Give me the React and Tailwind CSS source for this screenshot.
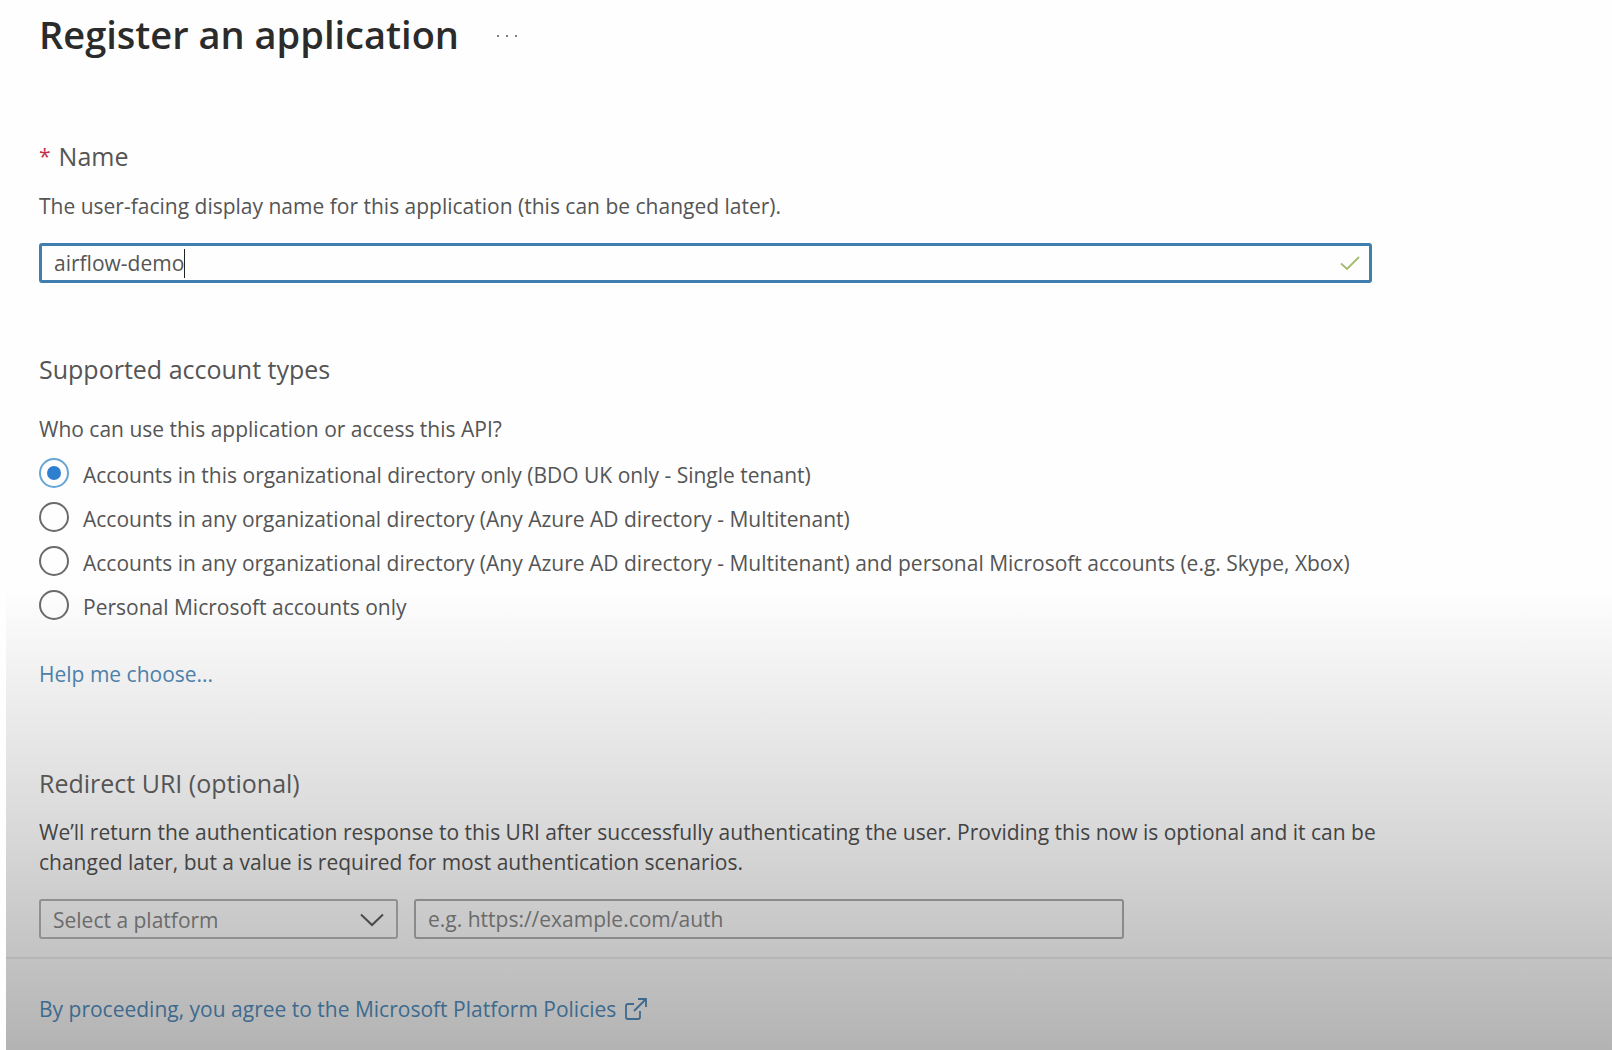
import { useState } from "react";

const accountTypes = [
  "Accounts in this organizational directory only (BDO UK only - Single tenant)",
  "Accounts in any organizational directory (Any Azure AD directory - Multitenant)",
  "Accounts in any organizational directory (Any Azure AD directory - Multitenant) and personal Microsoft accounts (e.g. Skype, Xbox)",
  "Personal Microsoft accounts only",
];

function AccountTypeOption({ label, value, checked, onSelect }) {
  return (
    <label className="flex h-[30px] items-center gap-[14px]">
      <input
        type="radio"
        name="account-type"
        value={value}
        checked={checked}
        onChange={onSelect}
        className="grid size-[30px] shrink-0 appearance-none place-items-center rounded-full border-2 border-[#6a6a6a] before:size-[14px] before:rounded-full checked:border-[#67a5d3] checked:before:bg-[#2f7fd0]"
      />
      <span className="pt-1">{label}</span>
    </label>
  );
}

export default function App() {
  const [name, setName] = useState("airflow-demo");
  const [accountType, setAccountType] = useState(0);

  return (
    <div className="min-h-screen bg-[#fefefe] pl-1.5 font-['Open_Sans','Noto_Sans',sans-serif] text-[21px] leading-[30px] text-[#555]">
      <form className="flex min-h-screen flex-col bg-linear-to-b from-[#fefefe] from-56% via-[#d9d9d9] via-79% to-[#b3b3b3]">
        <div className="max-w-[1400px] pr-[34px] pl-[33px]">
          <header className="flex items-center gap-[38px] pt-2.5">
            <h1 className="text-[38px] leading-[48px] font-semibold text-[#2b2b2b]">Register an application</h1>
            <button type="button" aria-label="More options" className="flex h-5 w-5 items-center justify-between pt-1">
              <span className="size-0.5 rounded-full bg-[#555]" />
              <span className="size-0.5 rounded-full bg-[#555]" />
              <span className="size-0.5 rounded-full bg-[#555]" />
            </button>
          </header>

          <section>
            <h2 className="mt-[82px] text-[25px] leading-8">
              <label htmlFor="app-name" className="flex gap-2">
                <span className="text-[21px] text-[#c4314b]">*</span>
                <span>Name</span>
              </label>
            </h2>
            <p className="mt-[19px]">The user-facing display name for this application (this can be changed later).</p>
            <div className="mt-[22px] flex h-10 items-center rounded-[3px] border-[3px] border-[#3f7fb0] bg-[#fefefe] pr-2 pl-3">
              <input
                id="app-name"
                value={name}
                onChange={(e) => setName(e.target.value)}
                className="field-sizing-content bg-transparent outline-none"
              />
              <span aria-hidden="true" className="h-[29px] w-px bg-[#222]" />
              <svg aria-hidden="true" viewBox="0 0 22 16" className="ml-auto h-4 w-[22px]" fill="none" stroke="#a3bb6c" strokeWidth="1.8">
                <path d="M2 8.5 L8 14 L20 2" />
              </svg>
            </div>
          </section>

          <section>
            <h2 className="mt-[70px] text-[25px] leading-8">Supported account types</h2>
            <fieldset>
              <legend className="pt-[29px]">Who can use this application or access this API?</legend>
              <div className="mt-3.5 flex flex-col gap-3.5">
                {accountTypes.map((label, i) => (
                  <AccountTypeOption
                    key={label}
                    label={label}
                    value={i}
                    checked={accountType === i}
                    onSelect={() => setAccountType(i)}
                  />
                ))}
              </div>
            </fieldset>
            <p className="mt-[39px]">
              <a href="#help" className="text-[#4c80aa]">Help me choose...</a>
            </p>
          </section>

          <section>
            <h2 className="mt-[78px] text-[25px] leading-8">Redirect URI (optional)</h2>
            <p className="-mr-5 mt-[18px] text-[#434343]">
              We’ll return the authentication response to this URI after successfully authenticating the user. Providing this now is optional and it can be changed later, but a value is required for most authentication scenarios.
            </p>
            <div className="mt-[22px] flex gap-4">
              <div className="relative w-[359px]">
                <select aria-label="Select a platform" className="h-10 w-full appearance-none rounded-[3px] border-2 border-[#909090] bg-transparent pt-0.5 pl-3 text-[#6b6b6b]">
                  <option>Select a platform</option>
                </select>
                <svg aria-hidden="true" viewBox="0 0 24 14" className="pointer-events-none absolute top-3.5 right-3.5 h-3.5 w-6" fill="none" stroke="#4a4a4a" strokeWidth="2">
                  <path d="M1 1.5 L12 12 L23 1.5" />
                </svg>
              </div>
              <input
                aria-label="Redirect URI"
                placeholder="e.g. https://example.com/auth"
                className="h-10 w-[710px] rounded-[3px] border-2 border-[#8a8a8a] bg-transparent pl-3 placeholder:text-[#6b6b6b]"
              />
            </div>
          </section>
        </div>

        <footer className="mt-[18px] border-t-2 border-[#b6b6b6] px-[33px] pt-[35px] pb-4">
          <a href="#policies" className="inline-flex items-center gap-2 text-[#3d6a8e]">
            By proceeding, you agree to the Microsoft Platform Policies
            <svg aria-hidden="true" viewBox="0 0 24 24" className="size-6" fill="none" stroke="currentColor" strokeWidth="1.8">
              <path d="M10 7 H4 Q2 7 2 9 V20 Q2 22 4 22 H14 Q16 22 16 20 V14" />
              <path d="M10 14 L22 2 M14 2 H22 V10" />
            </svg>
          </a>
        </footer>
      </form>
    </div>
  );
}
